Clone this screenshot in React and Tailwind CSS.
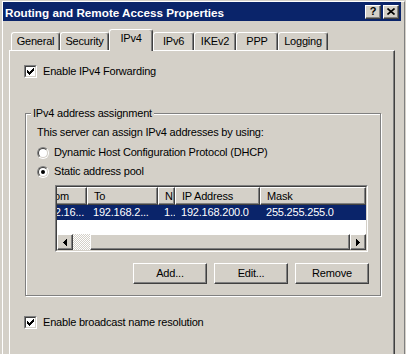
const raised =
  "bg-[#d4d0c8] border border-t-white border-l-white border-r-[#404040] border-b-[#404040] shadow-[inset_-1px_-1px_0_#808080]";

function CheckBox() {
  return (
    <div className="w-[13px] h-[13px] shrink-0 border border-t-[#808080] border-l-[#808080] border-b-white border-r-white">
      <div className="w-full h-full border border-t-[#404040] border-l-[#404040] border-b-[#d4d0c8] border-r-[#d4d0c8] bg-white flex items-center justify-center">
        <svg width="7" height="7" viewBox="0 0 7 7" shapeRendering="crispEdges">
          <rect x="6" y="0" width="1" height="1" fill="#000" />
          <rect x="5" y="1" width="2" height="1" fill="#000" />
          <rect x="0" y="2" width="1" height="1" fill="#000" />
          <rect x="4" y="2" width="3" height="1" fill="#000" />
          <rect x="0" y="3" width="2" height="1" fill="#000" />
          <rect x="3" y="3" width="3" height="1" fill="#000" />
          <rect x="0" y="4" width="5" height="1" fill="#000" />
          <rect x="1" y="5" width="3" height="1" fill="#000" />
          <rect x="2" y="6" width="1" height="1" fill="#000" />
        </svg>
      </div>
    </div>
  );
}

function Radio({ on }) {
  return (
    <div className="w-[12px] h-[12px] shrink-0 rounded-full border border-t-[#808080] border-l-[#808080] border-b-white border-r-white">
      <div className="w-full h-full rounded-full border border-t-[#404040] border-l-[#404040] border-b-[#d4d0c8] border-r-[#d4d0c8] bg-white flex items-center justify-center">
        {on && <div className="w-[4px] h-[4px] rounded-full bg-black" />}
      </div>
    </div>
  );
}

function Tab({ label, w, active }) {
  if (active) {
    return (
      <div
        className="relative z-10 h-[22px] shrink-0 bg-[#d4d0c8] border-t border-l border-r border-t-white border-l-white border-r-[#404040] rounded-t-[3px] shadow-[inset_-1px_0_0_#808080] flex justify-center pt-[2px]"
        style={{ width: w }}
      >
        {label}
      </div>
    );
  }
  return (
    <div
      className="h-[18px] mb-[1px] shrink-0 bg-[#d4d0c8] border-t border-l border-r border-t-white border-l-white border-r-[#404040] rounded-t-[3px] shadow-[inset_-1px_0_0_#808080] flex justify-center pt-[2px]"
      style={{ width: w }}
    >
      {label}
    </div>
  );
}

const cols = [50, 71, 17, 85, 106];
const heads = ["From", "To", "N", "IP Address", "Mask"];
const row = ["192.16...", "192.168.2...", "1...", "192.168.200.0", "255.255.255.0"];

function ArrowLeft() {
  return (
    <svg width="4" height="7" viewBox="0 0 4 7" shapeRendering="crispEdges">
      <rect x="0" y="3" width="1" height="1" fill="#000" />
      <rect x="1" y="2" width="1" height="3" fill="#000" />
      <rect x="2" y="1" width="1" height="5" fill="#000" />
      <rect x="3" y="0" width="1" height="7" fill="#000" />
    </svg>
  );
}

function ArrowRight() {
  return (
    <svg width="4" height="7" viewBox="0 0 4 7" shapeRendering="crispEdges">
      <rect x="3" y="3" width="1" height="1" fill="#000" />
      <rect x="2" y="2" width="1" height="3" fill="#000" />
      <rect x="1" y="1" width="1" height="5" fill="#000" />
      <rect x="0" y="0" width="1" height="7" fill="#000" />
    </svg>
  );
}

function ListView() {
  return (
    <div className="mt-[7px] ml-[18px] w-[313px] h-[67px] border border-t-[#808080] border-l-[#808080] border-b-white border-r-white">
      <div className="w-full h-full border border-t-[#404040] border-l-[#404040] border-b-[#d4d0c8] border-r-[#d4d0c8] bg-white flex flex-col overflow-hidden">
        <div className="h-[18px] shrink-0 overflow-hidden">
          <div className="flex -ml-[20px] h-full">
            {heads.map((h, i) => (
              <div
                key={h}
                className={`${raised} h-full shrink-0 pl-[6px] flex items-center whitespace-nowrap overflow-hidden`}
                style={{ width: cols[i] }}
              >
                {h}
              </div>
            ))}
          </div>
        </div>
        <div className="h-[15px] shrink-0 overflow-hidden">
          <div className="flex -ml-[20px] h-full bg-[#0a246a] text-white">
            {row.map((t, i) => (
              <div
                key={i}
                className="h-full shrink-0 pl-[6px] flex items-center whitespace-nowrap overflow-hidden"
                style={{ width: cols[i] }}
              >
                {t}
              </div>
            ))}
          </div>
        </div>
        <div className="flex-1" />
        <div className="h-[16px] shrink-0 flex">
          <div className={`${raised} w-[16px] h-full flex items-center justify-center`}>
            <ArrowLeft />
          </div>
          <div className="w-[17px] h-full bg-[image:repeating-conic-gradient(#ffffff_0%_25%,#d4d0c8_0%_50%)] bg-[length:2px_2px]" />
          <div className={`${raised} flex-1 h-full`} />
          <div className={`${raised} w-[16px] h-full flex items-center justify-center`}>
            <ArrowRight />
          </div>
        </div>
      </div>
    </div>
  );
}

function Button({ children }) {
  return (
    <div className={`${raised} w-[74px] h-[21px] flex items-center justify-center`}>
      {children}
    </div>
  );
}

export default function App() {
  return (
    <div className="w-[406px] h-[354px] overflow-hidden bg-[#d4d0c8] pt-[1px] pl-[2px] pr-[1px] font-['Liberation_Sans',Arial,sans-serif] text-[11px] leading-[13px] tracking-[-0.2px] text-black">
      <div className="h-[400px] border-t border-l border-r border-t-white border-l-white border-r-[#808080] flex flex-col">
        {/* caption */}
        <div className="h-[19px] shrink-0 mr-[3px] bg-[#0a246a] flex items-center pl-[2px] pr-[2px]">
          <span className="text-white font-bold text-[11.7px] tracking-normal pt-[1px]">
            Routing and Remote Access Properties
          </span>
          <div className="ml-auto flex gap-[2px]">
            <div className={`${raised} w-[16px] h-[14px] flex items-center justify-center font-bold text-[11px] leading-none tracking-normal`}>
              ?
            </div>
            <div className={`${raised} w-[16px] h-[14px] flex items-center justify-center`}>
              <svg width="8" height="7" viewBox="0 0 8 7">
                <path d="M0.5 0.5 L7.5 6.5 M7.5 0.5 L0.5 6.5" stroke="#000" strokeWidth="1.6" />
              </svg>
            </div>
          </div>
        </div>

        {/* tabs */}
        <div className="relative z-10 mt-[8px] ml-[8px] h-[22px] -mb-[1px] flex items-end">
          <Tab label="General" w={49} />
          <Tab label="Security" w={49} />
          <Tab label="IPv4" w={44} active />
          <Tab label="IPv6" w={41} />
          <Tab label="IKEv2" w={42} />
          <Tab label="PPP" w={42} />
          <Tab label="Logging" w={50} />
        </div>

        {/* page */}
        <div className="ml-[6px] w-[386px] flex-1 bg-[#d4d0c8] border-t border-l border-r border-t-white border-l-white border-r-[#404040] shadow-[inset_-1px_0_0_#808080] flex flex-col">
          <div className="mt-[14px] ml-[14px] h-[13px] flex items-center">
            <CheckBox />
            <span className="ml-[6px]">Enable IPv4 Forwarding</span>
          </div>

          <div className="relative mt-[35px] ml-[15px] w-[356px] h-[183px] shrink-0 border border-[#808080] shadow-[inset_1px_1px_0_#fff,1px_1px_0_#fff]">
            <div className="absolute left-[5px] -top-[7px] px-[2px] bg-[#d4d0c8]">IPv4 address assignment</div>
            <div className="pt-[12px] pl-[11px] flex flex-col">
              <div className="h-[13px]">This server can assign IPv4 addresses by using:</div>
              <div className="mt-[7px] h-[13px] flex items-center">
                <Radio />
                <span className="ml-[5px]">Dynamic Host Configuration Protocol (DHCP)</span>
              </div>
              <div className="mt-[6px] h-[13px] flex items-center">
                <Radio on />
                <span className="ml-[5px]">Static address pool</span>
              </div>
              <ListView />
              <div className="mt-[11px] ml-[18px] w-[314px] flex justify-end gap-[7px]">
                <Button>Add...</Button>
                <Button>Edit...</Button>
                <Button>Remove</Button>
              </div>
            </div>
          </div>

          <div className="mt-[20px] ml-[14px] h-[13px] flex items-center">
            <CheckBox />
            <span className="ml-[6px]">Enable broadcast name resolution</span>
          </div>
        </div>
      </div>
    </div>
  );
}
